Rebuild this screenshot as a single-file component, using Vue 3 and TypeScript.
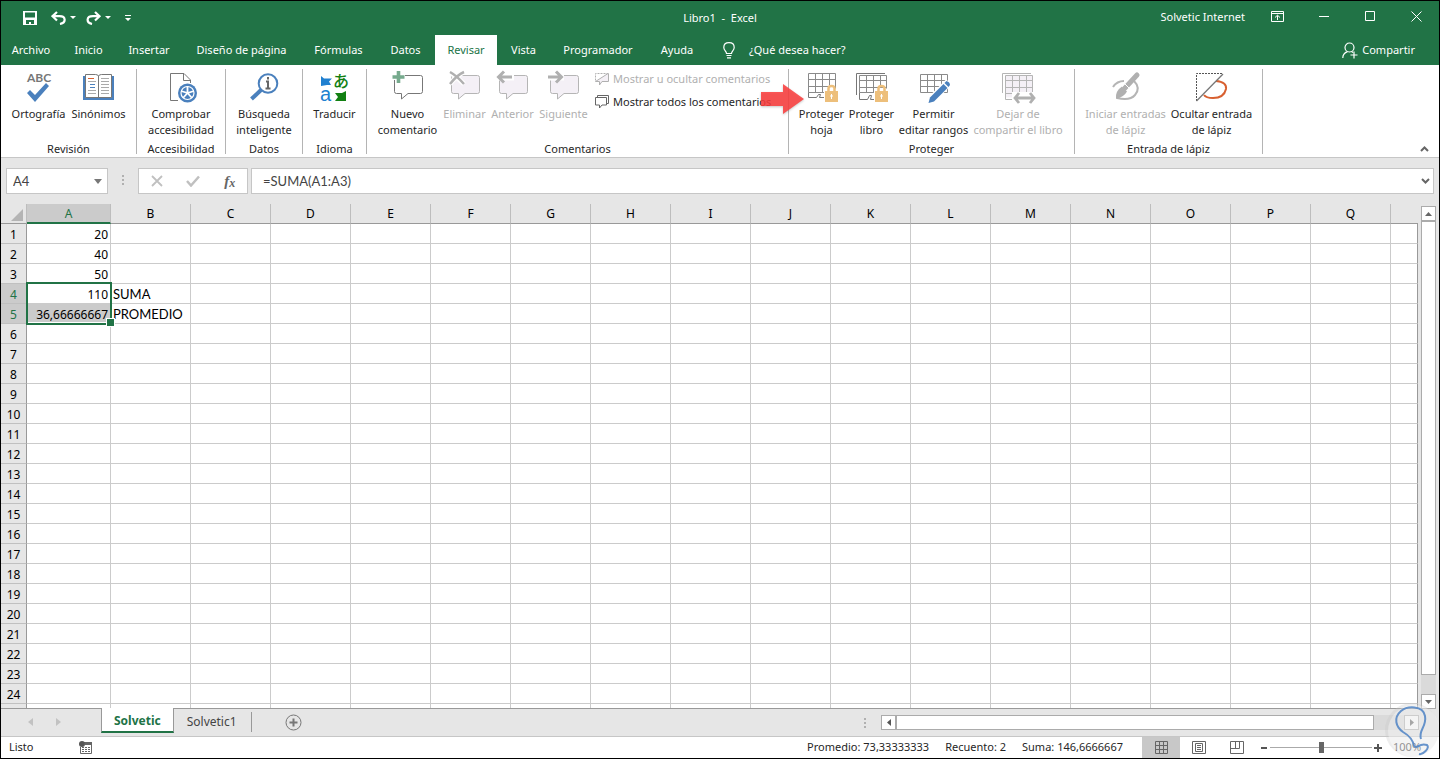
<script setup lang="ts">
import { ref } from 'vue'

type IconName =
  | 'spell' | 'book' | 'access' | 'search' | 'translate'
  | 'new' | 'delete' | 'prev' | 'next'
  | 'sheet' | 'workbook' | 'ranges' | 'unshare' | 'ink' | 'hideInk'

interface RibbonButton {
  icon: IconName
  lines: string[]
  disabled?: boolean
}

interface RibbonGroup {
  id: string
  title: string
  buttons: RibbonButton[]
}

const tabs: string[] = [
  'Archivo', 'Inicio', 'Insertar', 'Diseño de página', 'Fórmulas',
  'Datos', 'Revisar', 'Vista', 'Programador', 'Ayuda',
]
const activeTab = ref('Revisar')

const groups: RibbonGroup[] = [
  {
    id: 'review', title: 'Revisión', buttons: [
      { icon: 'spell', lines: ['Ortografía'] },
      { icon: 'book', lines: ['Sinónimos'] },
    ],
  },
  { id: 'access', title: 'Accesibilidad', buttons: [{ icon: 'access', lines: ['Comprobar', 'accesibilidad'] }] },
  { id: 'data', title: 'Datos', buttons: [{ icon: 'search', lines: ['Búsqueda', 'inteligente'] }] },
  { id: 'language', title: 'Idioma', buttons: [{ icon: 'translate', lines: ['Traducir'] }] },
  {
    id: 'comments', title: 'Comentarios', buttons: [
      { icon: 'new', lines: ['Nuevo', 'comentario'] },
      { icon: 'delete', lines: ['Eliminar'], disabled: true },
      { icon: 'prev', lines: ['Anterior'], disabled: true },
      { icon: 'next', lines: ['Siguiente'], disabled: true },
    ],
  },
  {
    id: 'protect', title: 'Proteger', buttons: [
      { icon: 'sheet', lines: ['Proteger', 'hoja'] },
      { icon: 'workbook', lines: ['Proteger', 'libro'] },
      { icon: 'ranges', lines: ['Permitir', 'editar rangos'] },
      { icon: 'unshare', lines: ['Dejar de', 'compartir el libro'], disabled: true },
    ],
  },
  {
    id: 'pen', title: 'Entrada de lápiz', buttons: [
      { icon: 'ink', lines: ['Iniciar entradas', 'de lápiz'], disabled: true },
      { icon: 'hideInk', lines: ['Ocultar entrada', 'de lápiz'] },
    ],
  },
]

const columns: string[] = 'ABCDEFGHIJKLMNOPQ'.split('')
const fullRows = 24
const cells: Record<string, string> = {
  A1: '20', A2: '40', A3: '50', A4: '110', A5: '36,66666667',
  B4: 'SUMA', B5: 'PROMEDIO',
}
const nameBox = ref('A4')
const formula = ref('=SUMA(A1:A3)')
const zoom = ref(50)
</script>

<template>
  <div class="window">
    <header class="top">
      <div class="titlebar">
        <div class="quick">
          <button class="q-save" aria-label="Guardar">
            <svg width="14" height="14" viewBox="0 0 14 14"><path d="M0 0H14V14H0ZM2 1.5V6.5H12V1.5ZM3 9V13H6V11H8V13H11V9Z" fill="#fff" fill-rule="evenodd" /></svg>
          </button>
          <button class="q-undo" aria-label="Deshacer">
            <svg width="25" height="14" viewBox="0 0 25 14"><path d="M6 1L1.5 5.2L6 9.5M2 5.2H8.5C15 5.2 15.500 11.500 9 13" fill="none" stroke="#fff" stroke-width="2.200" /><path d="M19 5h6l-3 3z" fill="#fff" /></svg>
          </button>
          <button class="q-redo" aria-label="Rehacer">
            <svg width="25" height="14" viewBox="0 0 25 14"><path d="M9 1L13.500 5.200L9 9.500M13 5.200H7C0 5.200 0 11.500 6 13" fill="none" stroke="#fff" stroke-width="2.200" /><path d="M19 5h6l-3 3z" fill="#fff" /></svg>
          </button>
          <button class="q-more" aria-label="Personalizar barra">
            <svg width="6" height="14" viewBox="0 0 6 14"><path d="M0 4h6v1H0zM0 7h6l-3 3z" fill="#fff" /></svg>
          </button>
        </div>
        <div class="title">Libro1&nbsp; -&nbsp; Excel</div>
        <div class="account">
          <span class="user">Solvetic Internet</span>
          <button aria-label="Opciones de la cinta">
            <svg width="13" height="11" viewBox="0 0 13 11"><path d="M.5.5h12v10H.5zM.5 2.500h12M6.500 9V4.500M4 6.500L6.500 4.200L9 6.500" fill="none" stroke="#fff" /></svg>
          </button>
          <button aria-label="Minimizar">
            <svg width="11" height="11" viewBox="0 0 11 11"><path d="M0 5.500h10" stroke="#fff" /></svg>
          </button>
          <button aria-label="Maximizar">
            <svg width="11" height="11" viewBox="0 0 11 11"><path d="M.5.5h9v9h-9z" fill="none" stroke="#fff" /></svg>
          </button>
          <button aria-label="Cerrar">
            <svg width="11" height="11" viewBox="0 0 11 11"><path d="M.5.5l10 10M10.500.5l-10 10" stroke="#fff" /></svg>
          </button>
        </div>
      </div>
      <nav class="menu">
        <div class="tabs">
          <button
            v-for="tab in tabs"
            :key="tab"
            class="tab"
            :class="{ active: tab === activeTab }"
            @click="activeTab = tab"
          >{{ tab }}</button>
        </div>
        <button class="tell">
          <svg width="12" height="17" viewBox="0 0 12 17"><path d="M3.500 11.500C3.500 9 .8 8.500.8 5.500C.8 2.600 3 .7 6 .7s5.200 1.900 5.200 4.800c0 3-2.700 3.500-2.700 6zM3.500 13.500h5M4 15.800h4" fill="none" stroke="#fff" stroke-width="1.200" /></svg>
          <span>¿Qué desea hacer?</span>
        </button>
        <button class="share">
          <svg width="16" height="17" viewBox="0 0 16 17"><circle cx="7.500" cy="5.500" r="4.500" fill="none" stroke="#fff" stroke-width="1.200" /><path d="M.8 16C.8 12.500 3 10.500 5.500 9.600M9.500 9.500L11 10.500M8.500 13h7M12 9.500v7" fill="none" stroke="#fff" stroke-width="1.200" /></svg>
          <span>Compartir</span>
        </button>
      </nav>
    </header>

    <section class="ribbon">
      <div v-for="group in groups" :key="group.id" class="group" :class="'g-' + group.id">
        <div class="group-body">
          <button
            v-for="item in group.buttons"
            :key="item.icon"
            class="tool"
            :class="'t-' + item.icon"
            :disabled="item.disabled"
          >
            <svg class="icon" width="32" height="32" viewBox="0 0 32 32" fill="none">
              <g v-if="item.icon === 'spell'">
                <text x="16" y="11" text-anchor="middle" class="abc">ABC</text>
                <path d="M4 22L7 19L12 24L23 12L26 15L12 31Z" fill="#4a80bd" />
              </g>
              <g v-else-if="item.icon === 'book'">
                <path d="M0 5h31v24H0z" fill="#4a80bd" />
                <path d="M2.500 3.500h10q3 0 3 2q0-2 3-2h10v23h-26z" fill="#fff" stroke="#777" />
                <path d="M15.500 5v21" stroke="#777" />
                <path d="M5 10.500h8M5 19.500h8M5 22.500h8M18 7.500h8M18 10.500h8M18 13.500h8M18 16.500h8M18 19.500h8M18 22.500h8" stroke="#aaa" />
                <path d="M5 7.500h6" stroke="#d86030" /><path d="M7 13.500h5M7 16.500h5" stroke="#4a80bd" />
              </g>
              <g v-else-if="item.icon === 'access'">
                <path d="M13 29.500H5.500v-27H19L25.500 9v3M18.500 2.500V9.500H25.500" stroke="#777" />
                <circle cx="22.500" cy="22" r="9.500" fill="#4a80bd" />
                <circle cx="22.500" cy="22" r="6.500" stroke="#fff" stroke-width="1.200" />
                <path d="M22.500 15v7l6.500-2M22.500 22l4.500 5M22.500 22l-4.500 5M22.500 22l-6.500-2" stroke="#fff" stroke-width="1.800" />
              </g>
              <g v-else-if="item.icon === 'search'">
                <path d="M13 19L3.500 28" stroke="#4a80bd" stroke-width="4" />
                <circle cx="20" cy="12.500" r="9.300" fill="#fff" stroke="#4a80bd" stroke-width="2" />
                <path d="M20 6v2.500M18 10.500h2v7M17.500 17.500h5" stroke="#666" stroke-width="2" />
              </g>
              <g v-else-if="item.icon === 'translate'">
                <text x="15" y="16" class="kana">あ</text>
                <text x="2" y="30" class="latin">a</text>
                <path d="M3 5L6 7.500H14L11 10.500L13 14H9L3 15Z" fill="#2080d0" />
                <path d="M28 20V30H17L20 26L17 22H24Z" fill="#128012" />
              </g>
              <g v-else-if="item.icon === 'new'">
                <path d="M4.500 4.500h24q2 0 2 2v14q0 2-2 2H16L9.500 28V22.500h-5q-2 0-2-2v-14q0-2 2-2z" fill="#fff" stroke="#777" />
                <path d="M7 0v12M1 6h12" stroke="#fff" stroke-width="6" />
                <path d="M6.500 0v12M.5 6h12" stroke="#76aa8d" stroke-width="3.600" />
              </g>
              <g v-else-if="item.icon === 'delete' || item.icon === 'prev' || item.icon === 'next'">
                <path d="M4.500 4.500h24q2 0 2 2v14q0 2-2 2H16L9.500 28V22.500h-5q-2 0-2-2v-14q0-2 2-2z" fill="#f4f0f6" stroke="#b5b5b5" />
                <g v-if="item.icon === 'delete'">
                  <path d="M1 1q7 5 14 12M15 1Q8 4 1 13" stroke="#fff" stroke-width="5" />
                  <path d="M1 1q7 4 14 12M15 1Q8 4 1 13" stroke="#b0b0b0" stroke-width="2.500" />
                </g>
                <g v-else-if="item.icon === 'prev'">
                  <path d="M0 6h17" stroke="#fff" stroke-width="7" />
                  <path d="M7 .5L1.500 6L7 11.500M2 6h13" stroke="#b0b0b0" stroke-width="3" />
                </g>
                <g v-else>
                  <path d="M0 6h16" stroke="#fff" stroke-width="7" />
                  <path d="M8 .5L13.500 6L8 11.500M13 6H0" stroke="#b0b0b0" stroke-width="3" />
                </g>
              </g>
              <g v-else-if="item.icon === 'sheet'">
                <path d="M2.500 2.500h27v15M2.500 2.500v19h17M2.500 8.500h27M2.500 15.500h27M9.500 2.500v19M16.500 2.500v19M23.500 2.500v12" stroke="#8a8a8a" />
                <path d="M2.500 21.500v5h8l2-3h2l-1 3h5" stroke="#777" />
                <path d="M18 19h14v13H18z" fill="#fff" />
                <path d="M22.500 21v-3.500q0-2.500 3-2.500t3 2.500V21" stroke="#edbf7b" stroke-width="2.500" />
                <path d="M19 20h13v11H19z" fill="#edbf7b" /><path d="M25.500 23v5M24 25h3" stroke="#fff" />
              </g>
              <g v-else-if="item.icon === 'workbook'">
                <path d="M.5 24V2.500H29" stroke="#777" />
                <path d="M3.500 4.500h27v13M3.500 4.500v17h16M3.500 9.500h27M3.500 16.500h27M10.500 4.500v17M17.500 4.500v17M24.500 4.500v10" stroke="#8a8a8a" />
                <path d="M3.500 21.500v7h8l2-4h2l-1 4h4" stroke="#777" />
                <path d="M18 19h14v13H18z" fill="#fff" />
                <path d="M22.500 21v-3.500q0-2.500 3-2.500t3 2.500V21" stroke="#edbf7b" stroke-width="2.500" />
                <path d="M19 20h13v11H19z" fill="#edbf7b" /><path d="M25.500 23v5M24 25h3" stroke="#fff" />
              </g>
              <g v-else-if="item.icon === 'ranges'">
                <path d="M2.500 3.500h27v18h-27zM2.500 9.500h27M2.500 15.500h27M9.500 3.500v18M16.500 3.500v18M23.500 3.500v18" stroke="#8a8a8a" />
                <path d="M31 11L11 31" stroke="#fff" stroke-width="8" />
                <path d="M10.500 32L12 26.500L25.500 13L29.500 17L16 30.500Z" fill="#4a80bd" />
                <path d="M26.500 12L28.500 10Q32 11 32 14L30.500 16Z" fill="#4a80bd" />
              </g>
              <g v-else-if="item.icon === 'unshare'">
                <path d="M.5 22V2.500H29" stroke="#b5b5b5" />
                <path d="M3.500 4.500h27v22h-27z" fill="#f4f0f6" />
                <path d="M30.500 21V4.500h-27v24h8v-5M3.500 9.500h27M3.500 16.500h27M3.500 22.500h27M10.500 4.500v22M17.500 4.500v18M24.500 4.500v18" stroke="#b5b5b5" />
                <path d="M10 21h23v11H10z" fill="#fff" />
                <path d="M17 22L13 27L17 32M28 22L32 27L28 32M13 27h19" stroke="#b0b0b0" stroke-width="2.800" />
              </g>
              <g v-else-if="item.icon === 'ink'">
                <path d="M3 16Q7 10 14 10M24 10Q31 17 25 24Q20 30 7 27" stroke="#b5b5b5" stroke-width="2" />
                <path d="M27 4L15 17" stroke="#b0b0b0" stroke-width="5" stroke-linecap="round" />
                <path d="M12 15.500L17 20.500Q14 26 6 28Q5 20 12 15.500Z" fill="#b0b0b0" />
                <path d="M15 13l6 6" stroke="#fff" />
              </g>
              <g v-else>
                <path d="M.5 30V2.500H27" stroke="#555" stroke-dasharray="2 1" />
                <path d="M20 10Q31 11 30 18Q28 27 17 27Q10 27 8 24" stroke="#d86030" stroke-width="2" />
                <path d="M27 3L.5 30" stroke="#777" stroke-width="1.300" />
              </g>
            </svg>
            <span v-for="line in item.lines" :key="line">{{ line }}</span>
          </button>
          <div v-if="group.id === 'comments'" class="list">
            <button disabled>
              <svg width="14" height="14" viewBox="0 0 14 14" fill="none"><path d="M.5 8.500v-7h13" stroke="#b0b0b0" stroke-dasharray="2 1" /><path d="M13.500 1.500v8H7L4.500 13V9.500h-4L13 1.500" fill="#f4f0f6" stroke="#b0b0b0" /></svg>
              <span>Mostrar u ocultar comentarios</span>
            </button>
            <button>
              <svg width="14" height="14" viewBox="0 0 14 14" fill="none"><path d="M2.500 2.500v-2h11v8h-2M.5 2.500h11v7.500H7L4.500 13V10h-4z" stroke="#666" /></svg>
              <span>Mostrar todos los comentarios</span>
            </button>
          </div>
        </div>
        <div class="group-title">{{ group.title }}</div>
      </div>
      <button class="collapse" aria-label="Contraer la cinta">
        <svg width="9" height="6" viewBox="0 0 9 6"><path d="M1 5L4.500 1.500L8 5" fill="none" stroke="#666" stroke-width="2" /></svg>
      </button>
      <svg class="pointer" width="48" height="36" viewBox="0 0 48 36" aria-hidden="true">
        <path d="M2 10H24V2L45 17L24 32V24H2Z" fill="#fc3c3c" fill-opacity=".86" />
      </svg>
    </section>

    <section class="formula-row">
      <div class="name-box">
        <input v-model="nameBox" aria-label="Cuadro de nombres" />
        <svg width="8" height="5" viewBox="0 0 8 5"><path d="M0 0h8L4 5z" fill="#777" /></svg>
      </div>
      <svg class="dots" width="3" height="12" viewBox="0 0 3 12"><path d="M0 0h2v2H0zM0 4h2v2H0zM0 8h2v2H0z" fill="#b0b0b0" /></svg>
      <div class="fx-box">
        <button aria-label="Cancelar"><svg width="12" height="12" viewBox="0 0 12 12"><path d="M1 1l10 10M11 1L1 11" stroke="#c0c0c0" stroke-width="1.800" /></svg></button>
        <button aria-label="Introducir"><svg width="14" height="12" viewBox="0 0 14 12"><path d="M1 6l4 4.500L13 1.500" fill="none" stroke="#c0c0c0" stroke-width="2.500" /></svg></button>
        <button class="fx" aria-label="Insertar función"><i>f</i><i class="sub">x</i></button>
      </div>
      <div class="formula">
        <input v-model="formula" aria-label="Barra de fórmulas" />
        <svg width="9" height="6" viewBox="0 0 9 6"><path d="M1 1l3.500 3.500L8 1" fill="none" stroke="#666" stroke-width="2" /></svg>
      </div>
    </section>

    <main class="sheet">
      <div class="grid">
        <table>
          <colgroup>
            <col class="c-head" />
            <col v-for="c in columns" :key="c" :class="c === 'A' ? 'c-first' : 'c-cell'" />
            <col />
          </colgroup>
          <thead>
            <tr>
              <th class="corner"><svg width="12" height="12" viewBox="0 0 12 12"><path d="M12 0v12H0z" fill="#b4b4b4" /></svg></th>
              <th v-for="c in columns" :key="c" scope="col" :class="{ picked: c === 'A' }">{{ c }}</th>
              <th class="tail"></th>
            </tr>
          </thead>
          <tbody>
            <tr v-for="r in fullRows + 1" :key="r">
              <th scope="row" :class="{ picked: r === 4 || r === 5 }">{{ r > fullRows ? '' : r }}</th>
              <td
                v-for="c in columns"
                :key="c"
                :class="{ num: c === 'A', shaded: c + r === 'A5', anchor: c + r === 'A4' }"
              >{{ cells[c + r] }}<span v-if="c + r === 'A4'" class="selection"></span></td>
              <td class="tail"></td>
            </tr>
          </tbody>
        </table>
      </div>
      <div class="vscroll">
        <button aria-label="Arriba"><svg width="7" height="4" viewBox="0 0 7 4"><path d="M0 4h7L3.500 0z" fill="#666" /></svg></button>
        <div class="vtrack"><div class="vthumb"></div></div>
        <button aria-label="Abajo"><svg width="7" height="4" viewBox="0 0 7 4"><path d="M0 0h7L3.500 4z" fill="#666" /></svg></button>
      </div>
    </main>

    <section class="sheet-tabs">
      <button class="arrow" aria-label="Hoja anterior"><svg width="5" height="8" viewBox="0 0 5 8"><path d="M5 0v8L0 4z" fill="#c2c2c2" /></svg></button>
      <button class="arrow" aria-label="Hoja siguiente"><svg width="5" height="8" viewBox="0 0 5 8"><path d="M0 0v8l5-4z" fill="#c2c2c2" /></svg></button>
      <button class="sheet-tab current">Solvetic</button>
      <button class="sheet-tab">Solvetic1</button>
      <button class="add" aria-label="Hoja nueva">
        <svg width="17" height="17" viewBox="0 0 17 17"><circle cx="8.500" cy="8.500" r="7.500" fill="none" stroke="#777" /><path d="M8.500 4.500v8M4.500 8.500h8" stroke="#777" stroke-width="2" /></svg>
      </button>
      <div class="hscroll">
        <svg class="hdots" width="2" height="10" viewBox="0 0 2 10"><path d="M0 0h2v2H0zM0 4h2v2H0zM0 8h2v2H0z" fill="#b0b0b0" /></svg>
        <button aria-label="Izquierda"><svg width="4" height="7" viewBox="0 0 4 7"><path d="M4 0v7L0 3.500z" fill="#555" /></svg></button>
        <div class="htrack"><div class="hthumb"></div></div>
        <button aria-label="Derecha"><svg width="4" height="7" viewBox="0 0 4 7"><path d="M0 0v7l4-3.500z" fill="#555" /></svg></button>
      </div>
    </section>

    <footer class="status">
      <span class="ready">Listo</span>
      <svg width="13" height="13" viewBox="0 0 13 13"><path d="M5 1.500h8M1.500 6v6.500h11V1" fill="none" stroke="#666" /><path d="M6 1h7v3H6z" fill="#666" /><circle cx="3" cy="3" r="3" fill="#555" /><path d="M3 6.500h2M6 6.500h2M9 6.500h2M3 8.500h2M6 8.500h2M9 8.500h2M3 10.500h2M6 10.500h2M9 10.500h2" stroke="#666" /></svg>
      <div class="stats">
        <span>Promedio: 73,33333333</span>
        <span>Recuento: 2</span>
        <span>Suma: 146,6666667</span>
      </div>
      <button class="view on" aria-label="Normal"><svg width="13" height="13" viewBox="0 0 13 13"><path d="M.5.5h12v12H.5zM.5 4.500h12M.5 8.500h12M4.500.5v12M8.500.5v12" fill="none" stroke="#666" /></svg></button>
      <button class="view" aria-label="Diseño de página"><svg width="14" height="13" viewBox="0 0 14 13"><path d="M.5.5h13v12H.5zM3.500 2.500h7v8h-7zM5 4.500h4M5 6.500h4M5 8.500h4" fill="none" stroke="#666" /></svg></button>
      <button class="view" aria-label="Salto de página"><svg width="14" height="13" viewBox="0 0 14 13"><path d="M.5.5h13v12H.5zM5.500.5v7M9.500.5v7M.5 7.500h9" fill="none" stroke="#666" /></svg></button>
      <button class="step" aria-label="Alejar"><svg width="8" height="8" viewBox="0 0 8 8"><path d="M1 4h6" stroke="#555" stroke-width="2" /></svg></button>
      <input v-model="zoom" class="zoom" type="range" min="0" max="100" aria-label="Zoom" />
      <button class="step" aria-label="Acercar"><svg width="8" height="8" viewBox="0 0 8 8"><path d="M0 4h8M4 0v8" stroke="#555" stroke-width="2" /></svg></button>
      <span class="percent">100%</span>
    </footer>

    <svg class="badge" width="56" height="56" viewBox="0 0 56 56" aria-hidden="true">
      <circle cx="29" cy="28" r="27" fill="#c8c8c8" fill-opacity=".3" />
      <circle cx="31" cy="29" r="26" fill="#fff" fill-opacity=".35" />
      <path d="M38 37C35 28 44 25 42 14C40 3 24 4 18 9C10 16 13 25 20 30C27 34 30 38 31 44C34 48 36 40 44 43C47 46 40 53 36 52" fill="none" stroke="#4d83c4" stroke-opacity=".85" stroke-width="2" stroke-linejoin="round" />
    </svg>
  </div>
</template>

<style>
html, body { margin: 0; overflow: hidden; }
</style>

<style scoped>
* { box-sizing: border-box; }
.window {
  position: relative;
  display: flex;
  flex-direction: column;
  height: 100vh;
  border: 1px solid #000;
  background: #e6e6e6;
  color: #262626;
  font: 11px/16px "Noto Sans", "Open Sans", "Noto Sans CJK JP", sans-serif;
}
button {
  display: inline-flex;
  align-items: center;
  justify-content: center;
  margin: 0;
  padding: 0;
  border: 0;
  background: none;
  color: inherit;
  font: inherit;
  white-space: nowrap;
}
input { font: inherit; color: inherit; min-width: 0; }
svg { display: block; flex: none; }

.top { background: #217346; color: #fff; }
.titlebar { display: grid; grid-template-columns: 1fr auto 1fr; align-items: center; height: 34px; }
.quick { display: flex; align-items: center; padding-left: 22px; }
.q-undo { margin-left: 14px; }
.q-redo { margin-left: 10px; }
.q-more { margin-left: 14px; }
.account { display: flex; align-items: center; justify-content: flex-end; gap: 35px; padding: 0 17px 3px 0; }
.user { margin-right: -9px; }
.menu { display: flex; align-items: stretch; height: 30px; }
.tabs { display: grid; grid-template-columns: 60px 55px 66px 119px 75px 59px 62px 53px 96px 62px; }
.tab.active { background: #fff; color: #217346; }
.tell { gap: 14px; margin-left: 15px; }
.share { gap: 4px; margin: 0 24px 0 auto; }

.ribbon {
  position: relative;
  display: flex;
  padding-top: 4px;
  border-bottom: 1px solid #c6c6c6;
  background: #fff;
}
.group {
  display: flex;
  flex-direction: column;
  height: 88px;
  padding-right: 1px;
  background: linear-gradient(#b4b4b4, #b4b4b4) right top / 1px 85px no-repeat;
}
.group-body { display: flex; flex: none; justify-content: center; height: 72px; padding-top: 2px; }
.group-title { text-align: center; line-height: 16px; white-space: nowrap; }
.g-review { width: 136px; }
.g-access { width: 89px; }
.g-data { width: 77px; }
.g-language { width: 64px; }
.g-comments { width: 422px; }
.g-protect { width: 286px; }
.g-pen { width: 188px; }
.g-comments .group-body { justify-content: flex-start; padding-left: 6px; }
.tool { flex-direction: column; justify-content: flex-start; }
.tool:disabled, .list button:disabled { color: #b0b0b0; }
.tool .icon { margin-bottom: 3px; overflow: visible; }
.t-spell, .t-book { width: 60px; }
.t-new { width: 69px; }
.t-delete { width: 45px; }
.t-prev, .t-next, .t-workbook { width: 51px; }
.t-sheet { width: 49px; }
.t-ranges { width: 73px; }
.t-unshare { width: 96px; }
.t-ink, .t-hideInk { width: 86px; }
.abc { fill: #777; font: 700 12px Lato, sans-serif; }
.kana { fill: #128012; font: 500 16px "Noto Sans CJK JP", sans-serif; }
.latin { fill: #2080d0; font: 400 20px "Liberation Sans", sans-serif; }
.list { display: flex; flex-direction: column; align-items: flex-start; gap: 7px; padding-left: 6px; }
.list button { gap: 4px; }
.collapse { margin: auto 10px 5px auto; }
.pointer { position: absolute; left: 758px; top: 17px; filter: drop-shadow(0 1px 1px rgba(0, 0, 0, 0.25)); }

.formula-row { display: flex; align-items: center; height: 46px; padding: 0 5px; }
.name-box, .fx-box, .formula { display: flex; align-items: center; height: 26px; border: 1px solid #c6c6c6; background: #fff; }
.name-box { width: 102px; padding: 0 5px 0 6px; }
.name-box input, .formula input { flex: 1; width: 20px; padding: 0; border: 0; outline: 0; background: none; font: 13px/18px Lato, sans-serif; color: #444; }
.dots { margin: 0 13px 0 14px; }
.fx-box { width: 110px; justify-content: space-around; }
.fx { color: #666; font: 700 15px/18px "Liberation Serif", serif; }
.fx .sub { font-size: 12px; padding-top: 3px; }
.formula { flex: 1; margin-left: 3px; padding: 0 3px 0 11px; }

.sheet { display: flex; flex: 1; min-height: 0; }
.grid { flex: 1; min-width: 0; overflow: hidden; border-bottom: 1px solid #999; }
table { width: 100%; table-layout: fixed; border-collapse: separate; border-spacing: 0; font: 13px/18px Lato, sans-serif; color: #000; }
.c-head { width: 26px; }
.c-first { width: 84px; }
.c-cell { width: 80px; }
th { padding: 0; font: 12px/17px "Noto Sans", sans-serif; text-align: center; background: #e6e6e6; }
thead th { height: 20px; border-bottom: 1px solid #999; border-right: 1px solid #bdbdbd; }
thead .tail { border-right: 0; }
thead .picked { background: #cbcbcb; color: #217346; border-bottom: 2px solid #217346; }
.corner svg { margin: 2px 3px 0 auto; }
tbody th { height: 20px; padding-top: 2px; border-bottom: 1px solid #c0c0c0; border-right: 1px solid #999; }
tbody .picked { background: #cbcbcb; color: #217346; }
td { height: 20px; padding: 2px 2px 0; line-height: 17px; white-space: nowrap; background: #fff; border-right: 1px solid #cbcbcb; border-bottom: 1px solid #cbcbcb; }
td.tail { border-right-color: #999; }
.num { text-align: right; font: 12px/17px "Noto Sans", sans-serif; }
.shaded { background: #cbcbcb; box-shadow: inset 1px -1px #fff; }
.anchor { position: relative; }
.selection { position: absolute; left: -1px; top: -2px; width: 86px; height: 43px; border: 2px solid #217346; }
.selection::after { content: ""; position: absolute; right: -5px; bottom: -4px; width: 7px; height: 7px; border: 1px solid #fff; background: #217346; }

.vscroll { display: flex; flex-direction: column; width: 21px; padding: 2px 3px 0; }
.vscroll button, .hscroll button { width: 15px; height: 15px; background: #fff; border: 1px solid #ababab; }
.vtrack { flex: 1; background: #dadada; }
.vthumb { height: 96%; background: #fff; border: 1px solid #ababab; }

.sheet-tabs { display: flex; align-items: flex-start; height: 28px; border-bottom: 1px solid #c6c6c6; font-size: 12px; }
.arrow { width: 28px; height: 26px; }
.arrow:first-child { margin-left: 15px; }
.sheet-tab { height: 20px; margin-top: 3px; padding: 0 14px 0 13px; border-right: 1px solid #999; color: #444; }
.sheet-tab.current { position: relative; height: 25px; margin: -1px 0 0 29px; padding: 2px 12px 0; background: #fff; border-left: 1px solid #999; border-bottom: 2px solid #217346; color: #217346; font-weight: 700; }
.add { height: 26px; margin-left: 33px; }
.hscroll { display: flex; align-items: center; flex: 0 1 555px; margin: 6px 20px 0 auto; }
.hdots { margin-right: 15px; }
.htrack { flex: 1; height: 15px; background: #dadada; }
.hthumb { width: 94%; height: 15px; background: #fff; border: 1px solid #ababab; }

.status { display: flex; align-items: center; height: 21px; padding-left: 8px; background: #fff; }
.ready { width: 70px; padding-bottom: 2px; }
.stats { display: flex; gap: 16px; margin: 0 19px 0 auto; padding-bottom: 2px; }
.view { width: 38px; height: 21px; }
.view.on { background: #c8c8c8; }
.step { width: 8px; }
.view + .step { margin-left: 4px; }
.zoom { width: 102px; height: 16px; margin: 0 2px; appearance: none; background: linear-gradient(#aaa, #aaa) center / 100% 1px no-repeat; }
.zoom::-webkit-slider-thumb { appearance: none; width: 5px; height: 11px; background: #666; }
.percent { width: 46px; margin: 0 0 0 11px; padding-bottom: 2px; }
.badge { position: absolute; right: 0; bottom: 0; }
</style>
